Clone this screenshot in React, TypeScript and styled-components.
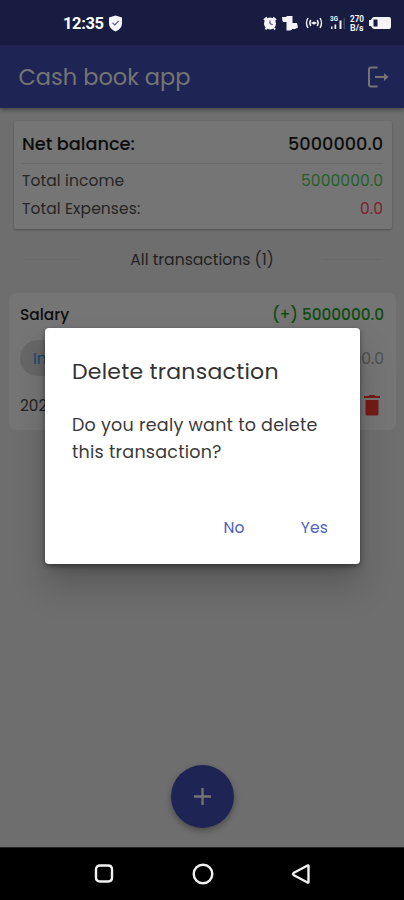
import React from "react";
import styled, { createGlobalStyle } from "styled-components";

const Global = createGlobalStyle`
  * { box-sizing: border-box; }
  body { margin: 0; background: #6e6e6e; }
`;

const Screen = styled.div`
  position: relative;
  width: 404px;
  height: 900px;
  overflow: hidden;
  display: flex;
  flex-direction: column;
  background: #6e6e6e;
  color: #0c0c0c;
  font-family: Poppins, Inter, sans-serif;
`;

const Text = styled.span<{ $size: number; $weight?: number; $gap?: number; $color?: string }>`
  font-size: ${(p) => p.$size}px;
  font-weight: ${(p) => p.$weight ?? 400};
  letter-spacing: ${(p) => p.$gap ?? 0}px;
  color: ${(p) => p.$color ?? "inherit"};
  white-space: nowrap;
`;

const StatusBar = styled.header`
  height: 45px;
  flex: none;
  display: flex;
  align-items: center;
  justify-content: space-between;
  padding: 1px 13px 0 63px;
  background: #171c40;
  color: #fff;
`;

const Clock = styled.div`
  display: flex;
  align-items: center;
  gap: 4px;
  font-family: Roboto, sans-serif;
`;

const AppBar = styled.div`
  height: 63px;
  flex: none;
  display: flex;
  align-items: center;
  justify-content: space-between;
  padding: 0 15px 0 18.5px;
  background: #1e2554;
  box-shadow: 0 2px 4px rgba(0, 0, 0, 0.35);
  color: #747474;
  z-index: 1;
`;

const Summary = styled.section`
  margin: 13px 12px 0 14px;
  height: 108px;
  flex: none;
  padding: 5px 9px 0 8px;
  background: #757575;
  border-radius: 2px;
  box-shadow: 0 1px 2px rgba(0, 0, 0, 0.28);
`;

const Row = styled.div<{ $height: number }>`
  height: ${(p) => p.$height}px;
  display: flex;
  align-items: center;
  justify-content: space-between;
`;

const BalanceRow = styled(Row)`
  margin-bottom: 2px;
`;

const Rule = styled.div<{ $width?: number }>`
  height: 1px;
  width: ${(p) => (p.$width ? `${p.$width}px` : "auto")};
  background: #696969;
`;

const Divider = styled.div`
  height: 60px;
  flex: none;
  display: flex;
  align-items: center;
  justify-content: space-between;
  padding: 0 23px;
`;

const Transaction = styled.section`
  margin: 4px 8px 0 9px;
  height: 137px;
  flex: none;
  padding: 6px 12px 0 11px;
  background: #757575;
  border-radius: 7px;
`;

const DateRow = styled(Row)`
  padding: 0 4px 0 0;
`;

const Chip = styled.div`
  display: flex;
  align-items: center;
  height: 36px;
  width: 90px;
  padding-left: 13px;
  border-radius: 18px;
  background: #676767;
`;

const Content = styled.main`
  flex: 1;
  display: flex;
  flex-direction: column;
`;

const AddButton = styled.button`
  width: 63px;
  height: 63px;
  margin: auto auto 19px;
  border: 0;
  border-radius: 50%;
  display: grid;
  place-items: center;
  background: #1e2554;
  box-shadow: 0 3px 5px rgba(0, 0, 0, 0.22), 0 2px 9px rgba(0, 0, 0, 0.12);
`;

const NavBar = styled.nav`
  height: 53px;
  flex: none;
  display: flex;
  align-items: center;
  justify-content: space-between;
  padding: 0 92px 0 93px;
  background: #000;
  border-top: 1px solid #242424;
`;

const Dialog = styled.div`
  position: absolute;
  left: 45px;
  top: 328px;
  width: 315px;
  height: 236px;
  z-index: 2;
  display: flex;
  flex-direction: column;
  padding: 27px 17px 18px 27px;
  background: #fff;
  border-radius: 4px;
  box-shadow: 0 11px 15px -7px rgba(0, 0, 0, 0.2), 0 22px 34px 2px rgba(0, 0, 0, 0.16),
    0 2px 5px rgba(0, 0, 0, 0.4);
`;

const Message = styled.div`
  display: flex;
  flex-direction: column;
  margin-top: 24px;
  line-height: 27px;
`;

const Actions = styled.div`
  display: flex;
  justify-content: flex-end;
  gap: 26px;
  margin-top: auto;
`;

const Action = styled.button`
  height: 38px;
  padding: 0 15px;
  border: 0;
  background: none;
  font: inherit;
  color: #4f5fc0;
`;

const Shield = () => (
  <svg width="15" height="17" viewBox="0 0 15 17">
    <path d="M7.5 .6 14 2.6v6q0 5-6.500 8Q1 13.600 1 8.600v-6z" fill="#f5f5fa" />
    <path d="m4.500 7.800 2.300 2.200 4-4.200" fill="none" stroke="#55597a" strokeWidth="1.100" />
  </svg>
);

const StatusIcons = () => (
  <svg width="130" height="20" viewBox="261 13 130 20" fill="#f4f4f8">
    <circle cx="270" cy="23.500" r="6" />
    <path d="m264 20 3-2.500m6 0 3 2.500M266.500 28l-1 1.500m8.500-1.500 1 1.500" stroke="#f4f4f8" strokeWidth="2" />
    <path d="M270 20.500v3.300l2.700.7" fill="none" stroke="#34385a" />
    <path d="M286.500 16h6v11.500q0 3-3 3h-3z" />
    <path d="M282 17h5v5h-4q-1-2.500-1-5zm10 6h5l1 4.500-3 1.500h-3z" />
    <g fill="none" stroke="#f4f4f8" strokeWidth="1.400">
      <path d="M308 18q-3 5 0 10m2.800-8q-2 3 0 6m9.200-8q3 5 0 10m-2.800-8q2 3 0 6" />
      <path d="M311.500 23h5" />
    </g>
    <circle cx="314" cy="23" r="1.500" />
    <text x="330" y="21" fontFamily="Roboto" fontWeight="700" fontSize="8" textLength="8" lengthAdjust="spacingAndGlyphs">3G</text>
    <path d="M331 26.500h1.500V29H331zm3.500-2h1.700V29h-1.700zm5-4h2V29h-2z" />
    <path d="M343.500 18h1.500v11h-1.500z" opacity=".2" />
    <text x="350" y="22" fontFamily="Roboto" fontWeight="700" fontSize="9.500" textLength="14" lengthAdjust="spacingAndGlyphs">270</text>
    <text x="350" y="31" fontFamily="Roboto" fontWeight="700" fontSize="9.500" textLength="13.500" lengthAdjust="spacingAndGlyphs">B/s</text>
    <path d="M374 17h15q2 0 2 2v8q0 2-2 2h-15q-2 0-3-3h-2v-6h2q1-3 3-3z" />
    <path d="M373.500 19.500h4v7h-4z" fill="#171c40" />
  </svg>
);

const Logout = () => (
  <svg width="22" height="22" viewBox="0 0 22 22" fill="none" stroke="#747474" strokeWidth="2">
    <path d="M10.500 1.500H4Q2 1.500 2 3.500v15q0 2 2 2h6.500M8 11h11" />
    <path d="m17 7 4.500 4L17 15z" fill="#747474" stroke="none" />
  </svg>
);

const Trash = () => (
  <svg width="16" height="21" viewBox="0 0 16 21" fill="#751b16">
    <path d="M0 1h4.500l1-1h5l1 1H16v2H0zM1.500 5h13v14q0 1.500-1.500 1.500H3Q1.500 20.500 1.500 19z" />
  </svg>
);

const Plus = () => (
  <svg width="17" height="17" viewBox="0 0 17 17" stroke="#747474" strokeWidth="2.300">
    <path d="M0 8.500h17M8.500 0v17" />
  </svg>
);

const NavIcon = ({ d }: { d: string }) => (
  <svg width="22" height="22" viewBox="0 0 22 22" fill="none" stroke="#f2f2f2" strokeWidth="2.400" strokeLinejoin="round">
    <path d={d} />
  </svg>
);

export default function App() {
  return (
    <>
      <Global />
      <Screen>
        <StatusBar>
          <Clock>
            <Text $size={16.5} $weight={700} $gap={-0.4}>12:35</Text>
            <Shield />
          </Clock>
          <StatusIcons />
        </StatusBar>
        <AppBar>
          <Text $size={22.5}>Cash book app</Text>
          <Logout />
        </AppBar>
        <Content>
          <Summary>
            <BalanceRow $height={35}>
              <Text $size={17.7} $weight={500}>Net balance:</Text>
              <Text $size={17.7} $weight={500}>5000000.0</Text>
            </BalanceRow>
            <Rule />
            <Row $height={33}>
              <Text $size={15.5} $gap={0.1} $color="#262626">Total income</Text>
              <Text $size={15.5} $gap={0.1} $color="#25602a">5000000.0</Text>
            </Row>
            <Row $height={23}>
              <Text $size={15.5} $gap={0.1} $color="#262626">Total Expenses:</Text>
              <Text $size={15.5} $gap={0.1} $color="#80202a">0.0</Text>
            </Row>
          </Summary>
          <Divider>
            <Rule $width={58} />
            <Text $size={15.6} $color="#222222">All transactions (1)</Text>
            <Rule $width={58} />
          </Divider>
          <Transaction>
            <Row $height={30}>
              <Text $size={15.4} $weight={500}>Salary</Text>
              <Text $size={15.3} $weight={500} $color="#0f4c12">(+) 5000000.0</Text>
            </Row>
            <Row $height={58}>
              <Chip><Text $size={15.5} $color="#12486f">Income</Text></Chip>
              <Text $size={15.5} $color="#4f4f4f">5000000.0</Text>
            </Row>
            <DateRow $height={36}>
              <Text $size={15.3} $color="#222222">2022</Text>
              <Trash />
            </DateRow>
          </Transaction>
          <AddButton aria-label="Add"><Plus /></AddButton>
        </Content>
        <NavBar>
          <NavIcon d="M7 2.500h8q4 0 4 4v8q0 4-4 4H7q-4 0-4-4v-8q0-4 4-4z" />
          <NavIcon d="M20.300 11a9.300 9.300 0 1 1-18.600 0 9.300 9.300 0 0 1 18.600 0z" />
          <NavIcon d="M18.500 3v16q0 1-1 .5L3.500 12q-1-1 0-2l14-7.500q1-.5 1 .5z" />
        </NavBar>
        <Dialog role="dialog">
          <Text $size={22} $gap={0.25} $color="#333333">Delete transaction</Text>
          <Message>
            <Text $size={17.5} $gap={0.25} $color="#3a3a3a">Do you realy want to delete</Text>
            <Text $size={17.5} $gap={0.25} $color="#3a3a3a">this transaction?</Text>
          </Message>
          <Actions>
            <Action><Text $size={15.5} $gap={0.2}>No</Text></Action>
            <Action><Text $size={15.5} $gap={0.2}>Yes</Text></Action>
          </Actions>
        </Dialog>
      </Screen>
    </>
  );
}
